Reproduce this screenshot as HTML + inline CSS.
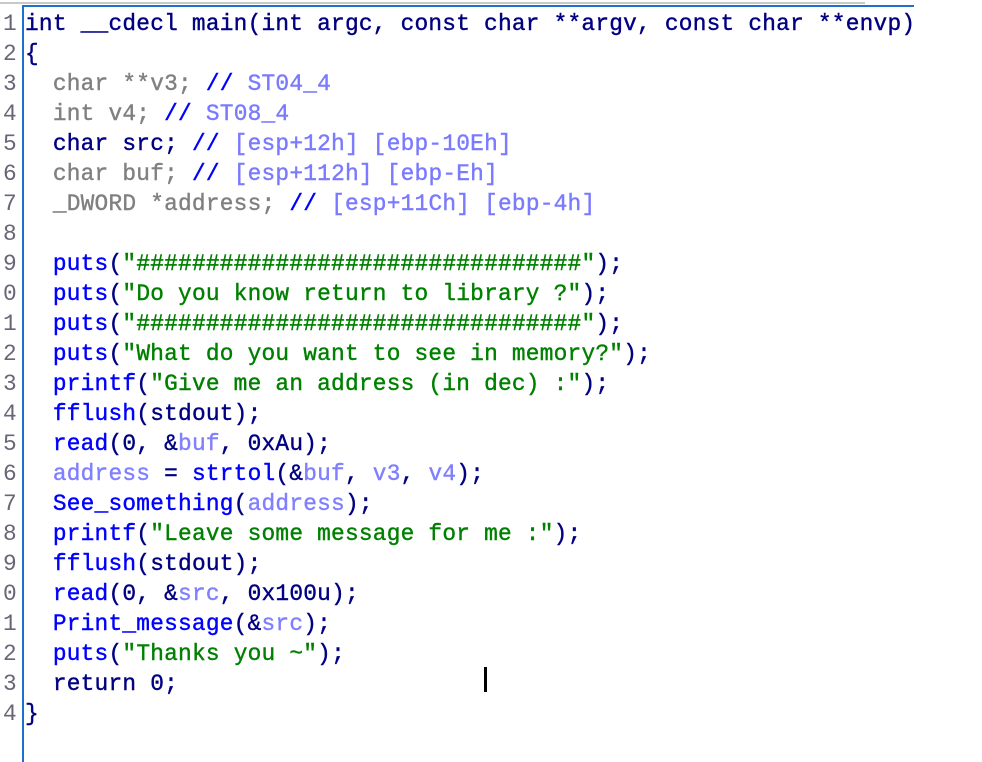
<!DOCTYPE html>
<html><head><style>
body{margin:0;background:#fff;width:982px;height:762px;overflow:hidden;position:relative;font-family:"Liberation Mono",monospace;}
.g{position:absolute;left:0;top:2px;width:865px;height:2px;background:#c8c8c8}
.bt{position:absolute;left:23px;top:5px;width:891px;height:2px;background:#1e6fd0}
.bl{position:absolute;left:22px;top:5px;width:2px;height:757px;background:#1e6fd0}
.nums{position:absolute;left:3px;top:9px;font-size:22.8px;line-height:30px;color:#667;white-space:pre;width:19px;overflow:hidden}
.code{position:absolute;left:25px;top:9px;width:889px;overflow:hidden;font-size:22.8px;letter-spacing:0.23px;line-height:30px;white-space:pre;color:#000080;-webkit-text-stroke:0.4px}
.k{color:#000080}.gr{color:#808080}.c{color:#7a7aff}.f{color:#0000ff}.s{color:#008000}.v{color:#8080ff}
.cur{position:absolute;left:484px;top:667px;width:3px;height:25px;background:#000}
</style></head><body>
<div class="g"></div><div class="bt"></div><div class="bl"></div>
<div class="nums">1
2
3
4
5
6
7
8
9
0
1
2
3
4
5
6
7
8
9
0
1
2
3
4</div>
<div class="code">int __cdecl main(int argc, const char **argv, const char **envp)
{
  <span class="gr">char **v3;</span> <span class="f">//</span> <span class="c">ST04_4</span>
  <span class="gr">int v4;</span> <span class="f">//</span> <span class="c">ST08_4</span>
  char src; <span class="f">//</span> <span class="c">[esp+12h] [ebp-10Eh]</span>
  <span class="gr">char buf;</span> <span class="f">//</span> <span class="c">[esp+112h] [ebp-Eh]</span>
  <span class="gr">_DWORD *address;</span> <span class="f">//</span> <span class="c">[esp+11Ch] [ebp-4h]</span>

  <span class="f">puts</span>(<span class="s">"################################"</span>);
  <span class="f">puts</span>(<span class="s">"Do you know return to library ?"</span>);
  <span class="f">puts</span>(<span class="s">"################################"</span>);
  <span class="f">puts</span>(<span class="s">"What do you want to see in memory?"</span>);
  <span class="f">printf</span>(<span class="s">"Give me an address (in dec) :"</span>);
  <span class="f">fflush</span>(stdout);
  <span class="f">read</span>(0, &amp;<span class="v">buf</span>, 0xAu);
  <span class="v">address</span> = <span class="f">strtol</span>(&amp;<span class="v">buf</span>, <span class="v">v3</span>, <span class="v">v4</span>);
  <span class="f">See_something</span>(<span class="v">address</span>);
  <span class="f">printf</span>(<span class="s">"Leave some message for me :"</span>);
  <span class="f">fflush</span>(stdout);
  <span class="f">read</span>(0, &amp;<span class="v">src</span>, 0x100u);
  <span class="f">Print_message</span>(&amp;<span class="v">src</span>);
  <span class="f">puts</span>(<span class="s">"Thanks you ~"</span>);
  return 0;
}</div>
<div class="cur"></div>
</body></html>
